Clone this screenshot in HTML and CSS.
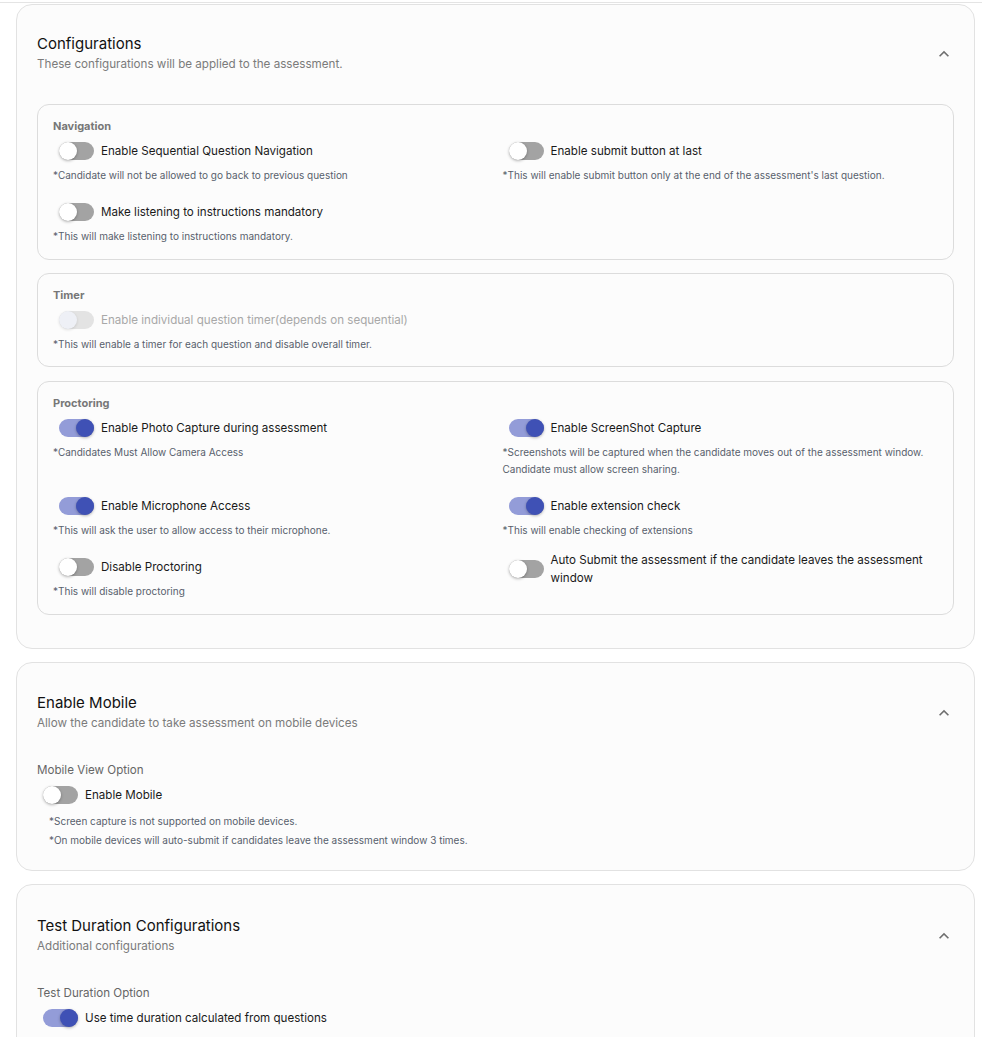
FILE: index.html
```html
<!DOCTYPE html>
<html>
<head>
    <meta name="viewport" content="width=device-width, initial-scale=1">
    <link rel="stylesheet" href="styles.css">
</head>
<body>
    <div class="top-line"></div>

    <div class="page">
        <!-- Configurations -->
        <section class="card card-config">
            <div class="card-head">
                <div>
                    <h2 class="card-title">Configurations</h2>
                    <p class="card-sub">These configurations will be applied to the assessment.</p>
                </div>
                <svg class="chevron" viewBox="0 0 24 24"><path d="M12 8l-6 6 1.41 1.41L12 10.83l4.59 4.58L18 14z"/></svg>
            </div>

            <div class="group">
                <h3 class="group-title">Navigation</h3>
                <div class="grid">
                    <div class="item">
                        <label class="toggle"><span class="switch"></span><span class="toggle-text">Enable Sequential Question Navigation</span></label>
                        <p class="help">*Candidate will not be allowed to go back to previous question</p>
                    </div>
                    <div class="item">
                        <label class="toggle"><span class="switch"></span><span class="toggle-text">Enable submit button at last</span></label>
                        <p class="help">*This will enable submit button only at the end of the assessment's last question.</p>
                    </div>
                    <div class="item">
                        <label class="toggle"><span class="switch"></span><span class="toggle-text">Make listening to instructions mandatory</span></label>
                        <p class="help">*This will make listening to instructions mandatory.</p>
                    </div>
                </div>
            </div>

            <div class="group group-timer">
                <h3 class="group-title">Timer</h3>
                <div class="grid">
                    <div class="item">
                        <label class="toggle disabled"><span class="switch"></span><span class="toggle-text">Enable individual question timer(depends on sequential)</span></label>
                        <p class="help">*This will enable a timer for each question and disable overall timer.</p>
                    </div>
                </div>
            </div>

            <div class="group group-proctoring">
                <h3 class="group-title">Proctoring</h3>
                <div class="grid">
                    <div class="item">
                        <label class="toggle on"><span class="switch"></span><span class="toggle-text">Enable Photo Capture during assessment</span></label>
                        <p class="help">*Candidates Must Allow Camera Access</p>
                    </div>
                    <div class="item">
                        <label class="toggle on"><span class="switch"></span><span class="toggle-text">Enable ScreenShot Capture</span></label>
                        <p class="help">*Screenshots will be captured when the candidate moves out of the assessment window.<br>Candidate must allow screen sharing.</p>
                    </div>
                    <div class="item">
                        <label class="toggle on"><span class="switch"></span><span class="toggle-text">Enable Microphone Access</span></label>
                        <p class="help">*This will ask the user to allow access to their microphone.</p>
                    </div>
                    <div class="item">
                        <label class="toggle on"><span class="switch"></span><span class="toggle-text">Enable extension check</span></label>
                        <p class="help">*This will enable checking of extensions</p>
                    </div>
                    <div class="item">
                        <label class="toggle"><span class="switch"></span><span class="toggle-text">Disable Proctoring</span></label>
                        <p class="help">*This will disable proctoring</p>
                    </div>
                    <div class="item">
                        <label class="toggle multi"><span class="switch"></span><span class="toggle-text">Auto Submit the assessment if the candidate leaves the assessment window</span></label>
                    </div>
                </div>
            </div>
        </section>

        <!-- Enable Mobile -->
        <section class="card card-mobile">
            <div class="card-head">
                <div>
                    <h2 class="card-title">Enable Mobile</h2>
                    <p class="card-sub">Allow the candidate to take assessment on mobile devices</p>
                </div>
                <svg class="chevron" viewBox="0 0 24 24"><path d="M12 8l-6 6 1.41 1.41L12 10.83l4.59 4.58L18 14z"/></svg>
            </div>
            <div class="option">
                <div class="option-title">Mobile View Option</div>
                <label class="toggle"><span class="switch"></span><span class="toggle-text">Enable Mobile</span></label>
                <ul class="notes">
                    <li>*Screen capture is not supported on mobile devices.</li>
                    <li>*On mobile devices will auto-submit if candidates leave the assessment window 3 times.</li>
                </ul>
            </div>
        </section>

        <!-- Test Duration -->
        <section class="card card-duration">
            <div class="card-head">
                <div>
                    <h2 class="card-title">Test Duration Configurations</h2>
                    <p class="card-sub">Additional configurations</p>
                </div>
                <svg class="chevron" viewBox="0 0 24 24"><path d="M12 8l-6 6 1.41 1.41L12 10.83l4.59 4.58L18 14z"/></svg>
            </div>
            <div class="option">
                <div class="option-title">Test Duration Option</div>
                <label class="toggle on"><span class="switch"></span><span class="toggle-text">Use time duration calculated from questions</span></label>
            </div>
        </section>
    </div>
</body>
</html>
```

FILE: styles.css
```css
/* Base */
body {
    margin: 0;
    font-family: Inter, "Noto Sans", sans-serif;
    color: #1a1a1a;
    background: #ffffff;
}

h2, h3, p, ul {
    margin: 0;
    padding: 0;
}

.top-line {
    height: 2px;
    border-bottom: 1px solid #e4e4e4;
}

.page {
    padding: 1px 7px 0 16px;
    display: flex;
    flex-direction: column;
    gap: 13px;
}

/* Cards */
.card {
    border: 1px solid #e2e2e2;
    border-radius: 16px;
    background: #fcfcfc;
    padding: 29px 20px 33px 20px;
}

.card-mobile {
    padding-top: 30px;
    padding-bottom: 20px;
}

.card-duration {
    padding-top: 31px;
}

.card-head {
    display: flex;
    justify-content: space-between;
    align-items: center;
}

.card-title {
    font-size: 15px;
    font-weight: 400;
    line-height: 20px;
    color: #111;
}

.card-sub {
    font-size: 11.65px;
    line-height: 20px;
    color: #7b7b7b;
}

.chevron {
    width: 20px;
    height: 20px;
    fill: #6f6f6f;
}

/* Groups inside configurations */
.group {
    border: 1px solid #dcdcdc;
    border-radius: 12px;
    padding: 13px 15px 14px 15px;
    margin-top: 13px;
}

.card-head + .group {
    margin-top: 30px;
}

.group-timer {
    padding-bottom: 13px;
}

.group-proctoring {
    margin-top: 14px;
}

.group-title {
    font-size: 11px;
    font-weight: 700;
    line-height: 16px;
    color: #777;
    margin-bottom: 4px;
}

.grid {
    display: grid;
    grid-template-columns: 1fr 1fr;
    column-gap: 14px;
    row-gap: 15px;
}

.help {
    font-size: 10px;
    line-height: 17px;
    color: #585f6c;
    margin-top: 3px;
}

/* Toggle */
.toggle {
    display: flex;
    align-items: center;
    gap: 7px;
    min-height: 26px;
    font-size: 11.6px;
    line-height: 18px;
    cursor: pointer;
}

.toggle.multi {
    margin-top: -3px;
}

.switch {
    flex: none;
    position: relative;
    width: 35px;
    height: 18px;
    margin-left: 6px;
    border-radius: 9px;
    background: #a3a3a3;
}

.switch::after {
    content: "";
    position: absolute;
    left: 0;
    top: 0;
    width: 18px;
    height: 18px;
    border-radius: 50%;
    background: #ffffff;
    box-shadow: 0 1px 3px rgba(0, 0, 0, 0.3);
}

.toggle.on .switch {
    background: #939cd8;
}

.toggle.on .switch::after {
    left: 17px;
    background: #3f51b5;
}

.toggle.disabled {
    color: #a8a8a8;
    cursor: default;
}

.toggle.disabled .switch {
    background: #e3e3e3;
}

.toggle.disabled .switch::after {
    background: #eef0f6;
    box-shadow: 0 1px 3px rgba(0, 0, 0, 0.12);
}

/* Single option sections */
.option {
    margin-top: 28px;
}

.option-title {
    font-size: 11.6px;
    line-height: 18px;
    color: #666;
    margin-bottom: 3px;
}

.notes {
    list-style: none;
    margin-top: 4px;
    padding-left: 12px;
    font-size: 10px;
    line-height: 19px;
    color: #585f6c;
}
```
